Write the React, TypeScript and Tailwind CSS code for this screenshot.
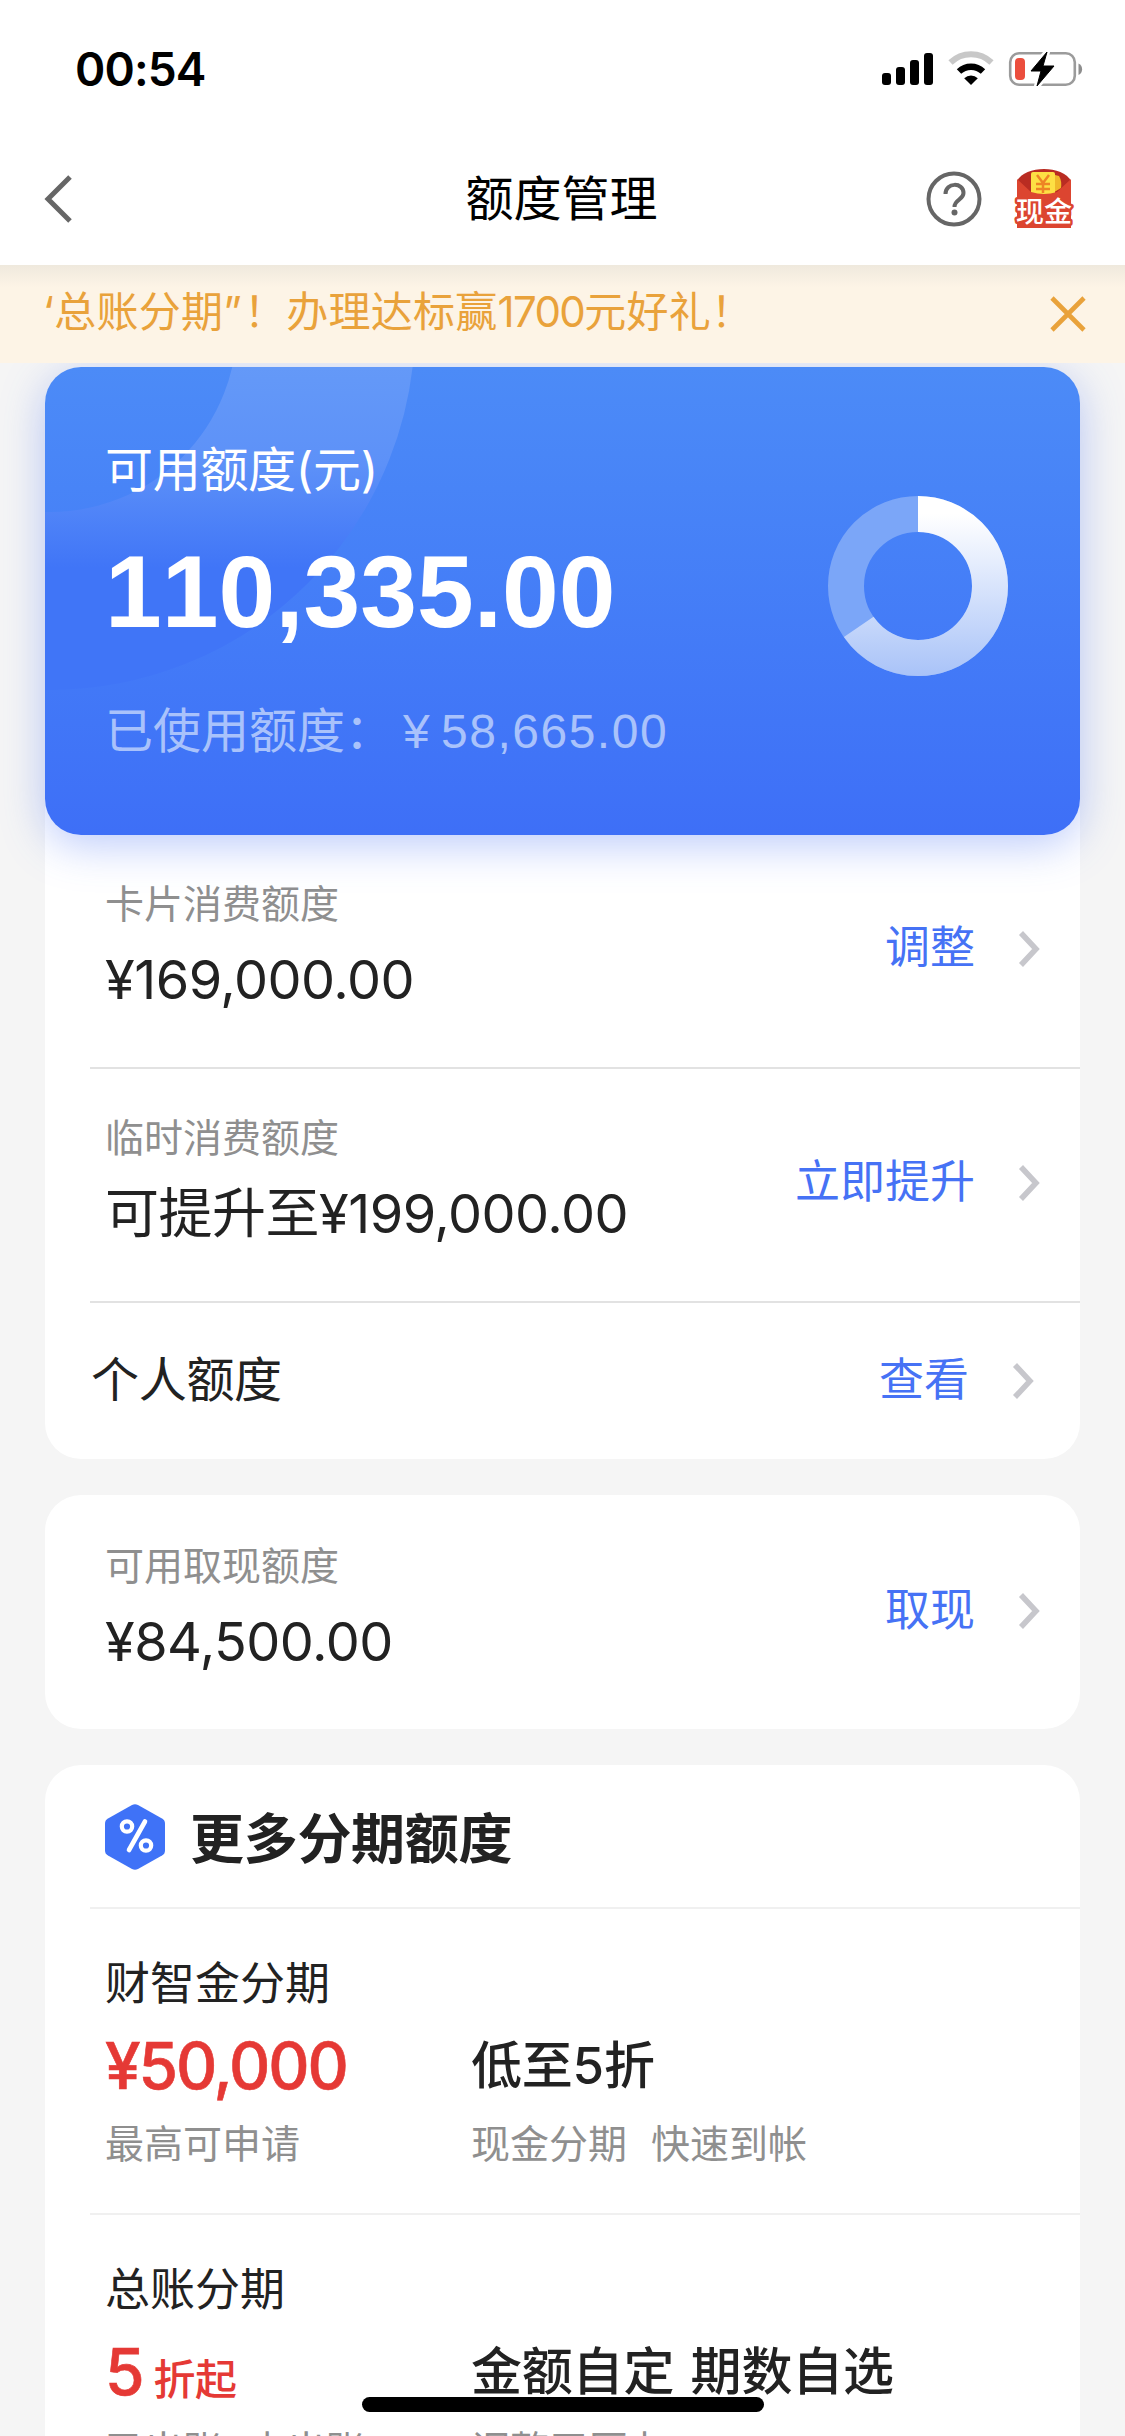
import type { ReactNode } from 'react'

const TOTAL_LIMIT = 169000
const AVAILABLE_LIMIT = 110335

function StatusBar() {
  return (
    <div className="flex h-[135px] items-start justify-between pr-[42px] pl-[75px]">
      <span className="mt-[41px] text-[46px] leading-[56px] font-semibold tracking-[-0.9px] text-black">00:54</span>
      <svg className="mt-[50px]" width="202" height="38" viewBox="0 0 202 38" fill="none">
        <rect x="1" y="23" width="9" height="12" rx="3" fill="#000" />
        <rect x="15" y="17" width="9" height="18" rx="3" fill="#000" />
        <rect x="29" y="10" width="9" height="25" rx="3" fill="#000" />
        <rect x="43" y="3" width="9" height="32" rx="3" fill="#000" />
        <path d="M69.500 12.500a29.500 29.500 0 0 1 41 0" stroke="#c8c8c8" strokeWidth="6" />
        <path d="M78 21.500a17.500 17.500 0 0 1 24 0" stroke="#000" strokeWidth="6.400" />
        <path d="M90 35l-6.800-6.800a10 10 0 0 1 13.600 0z" fill="#000" />
        <rect x="129.200" y="3.200" width="64.600" height="31.600" rx="9" stroke="#9b9b9b" strokeWidth="2.600" />
        <path d="M197.500 13.500c4.800 1.600 4.800 9.800 0 11.400z" fill="#8d8d8d" />
        <rect x="134" y="8" width="10" height="22" rx="4" fill="#eb4e3d" />
        <path
          d="M166 2l-16 19h10l-4 15 17-20h-11z"
          fill="#000"
          stroke="#fff"
          strokeWidth="6"
          strokeLinejoin="round"
        />
        <path d="M166 2l-16 19h10l-4 15 17-20h-11z" fill="#000" stroke="#000" strokeLinejoin="round" />
      </svg>
    </div>
  )
}

function CashIcon() {
  return (
    <svg width="62" height="62" viewBox="0 0 62 62">
      <path d="M4 13C12-3 50-3 58 13v20H4z" fill="#b92c22" />
      <path d="M38 6l8 2q3 5 2 12l-10 6z" fill="#f0b82a" />
      <path d="M18 6q0-2 2-2h20q2 0 2 2v22H18z" fill="#fde044" />
      <path d="M24 7l6 8 6-8M30 15v10M23 16h14M23 21h14" stroke="#ee8425" strokeWidth="2.500" fill="none" />
      <path d="M4 11l14 13q13 4 26 0l14-13v49H4z" fill="#dc4530" />
      <text
        x="31"
        y="54"
        textAnchor="middle"
        fontSize="28"
        fontWeight="500"
        fill="#fff"
        stroke="#dc4530"
        strokeWidth="5"
        strokeLinejoin="round"
        paintOrder="stroke"
      >
        现金
      </text>
    </svg>
  )
}

function NavBar() {
  return (
    <div className="grid h-[130px] grid-cols-[1fr_auto_1fr] items-center pr-[50px] pb-[3px] pl-[42px]">
      <svg width="32" height="50" viewBox="0 0 32 50" fill="none">
        <path d="M28 3L6 25l22 22" stroke="#666" strokeWidth="5" />
      </svg>
      <h1 className="pl-[6px] text-[48px] leading-[60px] text-black">额度管理</h1>
      <div className="flex items-center justify-end gap-[31px]">
        <svg width="56" height="56" viewBox="0 0 56 56" fill="none" stroke="#666">
          <circle cx="28" cy="28" r="25.500" strokeWidth="4" />
          <path d="M19.500 23c0-12 18-12 18-1 0 7-9 6.500-9 14" strokeWidth="4" />
          <circle cx="28.500" cy="41.500" r="3" fill="#666" stroke="none" />
        </svg>
        <CashIcon />
      </div>
    </div>
  )
}

function NoticeBanner() {
  return (
    <div className="relative z-20 flex h-[98px] items-center justify-between bg-[#fdf4e6] pr-[38px] pl-[43px] text-[#e9a23b]">
      <p className="-mt-[4px] text-[42px] leading-[50px] tracking-[0.25px] whitespace-pre">
        ‘总账分期”<span className="ml-[2px]">！办理达标赢</span>
        <span className="tracking-[-1.6px]">1700</span>元好礼！
      </p>
      <svg width="38" height="38" viewBox="0 0 38 38" fill="none">
        <path d="M3 3l32 32M35 3L3 35" stroke="currentColor" strokeWidth="4.600" />
      </svg>
      <div className="absolute inset-x-0 top-0 h-[22px] bg-linear-to-b from-[#efe9dd] to-[#fdf4e6]/0" />
    </div>
  )
}

function LimitDonut() {
  const circumference = 2 * Math.PI * 72
  const filled = (AVAILABLE_LIMIT / TOTAL_LIMIT) * circumference

  return (
    <svg width="180" height="180" viewBox="0 0 180 180" fill="none">
      <defs>
        <linearGradient id="donut" x1="180" y1="0" x2="0" y2="0" gradientUnits="userSpaceOnUse">
          <stop offset="0.1" stopColor="#fff" />
          <stop offset="1" stopColor="#a9c3f8" />
        </linearGradient>
      </defs>
      {/* rotated so the ring starts at twelve o'clock */}
      <g transform="rotate(-90 90 90)" strokeWidth="36">
        <circle cx="90" cy="90" r="72" stroke="#7ba6f8" />
        <circle cx="90" cy="90" r="72" stroke="url(#donut)" strokeDasharray={`${filled} ${circumference}`} />
      </g>
    </svg>
  )
}

function AvailableCard() {
  return (
    <div className="relative z-10 flex h-[468px] justify-between overflow-hidden rounded-[36px] bg-linear-to-b from-[#4c8bf7] to-[#3e6ff7] pr-[72px] pl-[60px] text-white">
      <svg className="absolute top-0 left-0" width="380" height="330" viewBox="0 0 380 330" fill="none">
        <defs>
          <linearGradient id="halo" x1="0" y1="0" x2="0" y2="324" gradientUnits="userSpaceOnUse">
            <stop offset="0" stopColor="#6499f8" />
            <stop offset="0.3" stopColor="#5d91f8" />
            <stop offset="0.62" stopColor="#4075f7" />
            <stop offset="1" stopColor="#4075f7" />
          </linearGradient>
        </defs>
        <circle cx="5" cy="-42" r="276" stroke="url(#halo)" strokeWidth="178" />
      </svg>
      <div className="relative pt-[73px]">
        <p className="text-[48px] leading-[60px] tracking-[-0.3px]">可用额度(元)</p>
        <p className="mt-[37px] font-['Liberation_Sans',sans-serif] text-[102px] leading-[110px] font-bold [font-kerning:none]">
          110,335.00
        </p>
        <p className="mt-[54px] text-[48px] leading-[60px] whitespace-pre text-[#a9c2fb]">
          已使用额度：
          <span className="ml-[10px] font-['Liberation_Sans','Noto_Sans_CJK_SC',sans-serif] tracking-[1.5px] [word-spacing:-5px]">
            ¥ 58,665.00
          </span>
        </p>
      </div>
      <div className="relative pt-[129px]">
        <LimitDonut />
      </div>
    </div>
  )
}

function ActionLink({ children }: { children: ReactNode }) {
  return (
    <a className="flex items-center gap-[43px] text-[45px] leading-[56px] text-[#4672f5]">
      {children}
      <svg className="mt-[2px]" width="22" height="36" viewBox="0 0 22 36" fill="none">
        <path d="M3 2l15 16L3 34" stroke="#c7c7cc" strokeWidth="5.500" />
      </svg>
    </a>
  )
}

interface LimitRowProps {
  label: string
  value: string
  action: string
}

function LimitRow({ label, value, action }: LimitRowProps) {
  return (
    <div className="flex h-[234px] items-center justify-between pr-[40px] pb-[4px] pl-[60px]">
      <div className="-mt-[2px]">
        <p className="text-[39px] leading-[50px] text-[#8f8f8f]">{label}</p>
        <p className="mt-[16px] text-[54px] leading-[70px] tracking-[-0.5px] text-[#222]">{value}</p>
      </div>
      <ActionLink>{action}</ActionLink>
    </div>
  )
}

function Divider({ color = 'bg-[#e2e2e2]' }: { color?: string }) {
  return <div className={`ml-[45px] h-[2px] -mb-[2px] ${color}`} />
}

interface InstallmentRowProps {
  title: string
  highlight: ReactNode
  highlightNote: string
  headline: string
  note: string
}

function InstallmentRow({ title, highlight, highlightNote, headline, note }: InstallmentRowProps) {
  return (
    <div className="h-[306px] px-[60px] pt-[49px]">
      <p className="text-[45px] leading-[56px] text-[#222]">{title}</p>
      <div className="mt-[15px] grid h-[78px] grid-cols-[366px_1fr] items-center">
        <p className="text-[64px] leading-[78px] font-medium tracking-[-2.1px] text-[#e53935] [-webkit-text-stroke:0.6px]">
          {highlight}
        </p>
        <p className="text-[51px] leading-[78px] font-medium tracking-[-0.2px] text-[#222] [word-spacing:3px]">{headline}</p>
      </div>
      <div className="mt-[14px] grid grid-cols-[366px_1fr] text-[39px] leading-[50px] whitespace-pre text-[#8f8f8f] [word-spacing:1px]">
        <p>{highlightNote}</p>
        <p>{note}</p>
      </div>
    </div>
  )
}

function PercentBadge() {
  return (
    <svg width="60" height="66" viewBox="0 0 60 66" fill="none">
      <path
        d="M27 1q3-1.600 6 0l24 13.500q3 1.700 3 5v27q0 3.300-3 5L33 65q-3 1.600-6 0L3 51.500q-3-1.700-3-5v-27q0-3.300 3-5z"
        fill="#3f72f7"
      />
      <path d="M40 17.500L24 46" stroke="#fff" strokeWidth="4.600" strokeLinecap="round" />
      <circle cx="22" cy="22.500" r="5.200" stroke="#fff" strokeWidth="4.200" />
      <circle cx="41" cy="41.500" r="5.200" stroke="#fff" strokeWidth="4.200" />
    </svg>
  )
}

export default function App() {
  return (
    <div className="relative h-[2436px] w-[1125px] overflow-hidden bg-[#f5f5f5] font-['Inter','Noto_Sans_CJK_SC',sans-serif]">
      <header className="bg-white">
        <StatusBar />
        <NavBar />
      </header>
      <NoticeBanner />

      <main className="flex flex-col gap-[36px] px-[45px] pt-[4px]">
        <section>
          <div className="relative z-10 rounded-[36px] shadow-[0_10px_44px_rgba(70,110,245,0.36)]">
            <AvailableCard />
          </div>
          <div className="-mt-[36px] rounded-b-[36px] bg-white pt-[34px]">
            <LimitRow label="卡片消费额度" value="¥169,000.00" action="调整" />
            <Divider />
            <LimitRow label="临时消费额度" value="可提升至¥199,000.00" action="立即提升" />
            <Divider />
            <div className="flex h-[158px] items-center justify-between pr-[46px] pl-[46px]">
              <p className="text-[48px] leading-[60px] tracking-[-0.3px] text-[#222]">个人额度</p>
              <ActionLink>查看</ActionLink>
            </div>
          </div>
        </section>

        <section className="rounded-[36px] bg-white">
          <LimitRow label="可用取现额度" value="¥84,500.00" action="取现" />
        </section>

        <section className="rounded-t-[36px] bg-white">
          <div className="flex h-[142px] items-center gap-[25px] pt-[2px] pl-[60px]">
            <PercentBadge />
            <h2 className="pt-[5px] text-[54px] leading-[66px] font-bold tracking-[-0.3px] text-[#222]">更多分期额度</h2>
          </div>
          <Divider color="bg-[#f0f0f0]" />
          <InstallmentRow
            title="财智金分期"
            highlight="¥50,000"
            highlightNote="最高可申请"
            headline="低至5折"
            note="现金分期  快速到帐"
          />
          <Divider color="bg-[#f0f0f0]" />
          <InstallmentRow
            title="总账分期"
            highlight={
              <>
                5<span className="ml-[11px] text-[42px] leading-none tracking-[-0.5px] [-webkit-text-stroke:0]">折起</span>
              </>
            }
            highlightNote="已出账+未出账"
            headline="金额自定 期数自选"
            note="调整无压力"
          />
        </section>
      </main>

      <div className="absolute top-[2397px] left-[362px] z-30 h-[15px] w-[402px] rounded-full bg-black" />
    </div>
  )
}
